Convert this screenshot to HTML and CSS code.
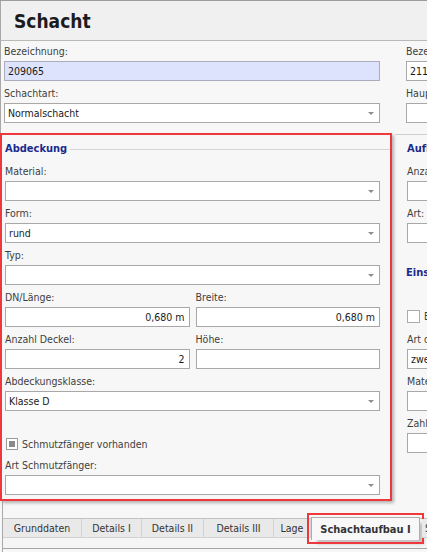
FILE: index.html
```html
<!DOCTYPE html>
<html lang="de">
<head>
<meta charset="utf-8">
<title>Schacht</title>
<link rel="stylesheet" href="styles.css">
</head>
<body>
<div class="window">
  <div class="header"><h1>Schacht</h1></div>
  <div class="cols">
    <div class="left">
      <div class="top">
        <div class="field">
          <div class="lbl">Bezeichnung:</div>
          <div class="inp hl">209065</div>
        </div>
        <div class="field">
          <div class="lbl">Schachtart:</div>
          <div class="inp sel">Normalschacht</div>
        </div>
      </div>
      <div class="group red">
        <div class="gtitle line">Abdeckung</div>
        <div class="gfields">
          <div class="field">
            <div class="lbl">Material:</div>
            <div class="inp sel"></div>
          </div>
          <div class="field">
            <div class="lbl">Form:</div>
            <div class="inp sel">rund</div>
          </div>
          <div class="field">
            <div class="lbl">Typ:</div>
            <div class="inp sel"></div>
          </div>
          <div class="row2">
            <div class="field">
              <div class="lbl">DN/Länge:</div>
              <div class="inp num">0,680 m</div>
            </div>
            <div class="field">
              <div class="lbl">Breite:</div>
              <div class="inp num">0,680 m</div>
            </div>
          </div>
          <div class="row2">
            <div class="field">
              <div class="lbl">Anzahl Deckel:</div>
              <div class="inp num">2</div>
            </div>
            <div class="field">
              <div class="lbl">Höhe:</div>
              <div class="inp num"></div>
            </div>
          </div>
          <div class="field">
            <div class="lbl">Abdeckungsklasse:</div>
            <div class="inp sel">Klasse D</div>
          </div>
          <div class="check-row first-check">
            <span class="cb indet"></span>
            <span class="cb-text">Schmutzfänger vorhanden</span>
          </div>
          <div class="field">
            <div class="lbl">Art Schmutzfänger:</div>
            <div class="inp sel"></div>
          </div>
        </div>
      </div>
      <div class="spacer"></div>
    </div>
    <div class="right">
      <div class="rtop">
        <div class="field">
          <div class="lbl">Bezeichnung:</div>
          <div class="inp wide">211065</div>
        </div>
        <div class="field">
          <div class="lbl">Hauptkanal:</div>
          <div class="inp wide"></div>
        </div>
      </div>
      <div class="rgroup">
        <div class="gtitle">Aufbau</div>
        <div class="gfields">
          <div class="field">
            <div class="lbl">Anzahl Ringe:</div>
            <div class="inp wide"></div>
          </div>
          <div class="field">
            <div class="lbl">Art:</div>
            <div class="inp wide"></div>
          </div>
        </div>
        <div class="gtitle second">Einstieg</div>
        <div class="gfields">
          <div class="check-row second-check">
            <span class="cb big"></span>
            <span class="cb-text">Einstiegshilfe vorhanden</span>
          </div>
          <div class="field">
            <div class="lbl">Art der Einstiegshilfe:</div>
            <div class="inp wide">zweiholmig</div>
          </div>
          <div class="field">
            <div class="lbl">Material:</div>
            <div class="inp wide"></div>
          </div>
          <div class="field">
            <div class="lbl">Zahl der Steigeisen:</div>
            <div class="inp wide"></div>
          </div>
        </div>
      </div>
    </div>
  </div>
  <div class="tabarea">
    <div class="tabstrip">
      <div class="tab t1">Grunddaten</div>
      <div class="tab t2">Details I</div>
      <div class="tab t3">Details II</div>
      <div class="tab t4">Details III</div>
      <div class="tab t5">Lage</div>
      <div class="tab active">Schachtaufbau I</div>
      <div class="tab t7">Schachtaufbau II</div>
    </div>
  </div>
</div>
</body>
</html>
```

FILE: styles.css
```css
html, body {
  margin: 0;
  padding: 0;
}
body {
  width: 427px;
  height: 552px;
  overflow: hidden;
  background: #f7f7f7;
  font-family: "DejaVu Sans Condensed", "DejaVu Sans", sans-serif;
  font-stretch: condensed;
  font-size: 10.5px;
  color: #3e3e3e;
}
.window {
  width: 427px;
  height: 552px;
  box-sizing: border-box;
  border-top: 1px solid #9c9c9c;
  display: flex;
  flex-direction: column;
}
.header {
  height: 39px;
  flex: none;
  background: #f0f0f0;
  border-bottom: 1px solid #b9b9b9;
  border-left: 1px solid #a8a8a8;
  display: flex;
  align-items: center;
  padding-left: 13px;
}
h1 {
  margin: 0;
  font-size: 19px;
  line-height: 22px;
  font-weight: bold;
  color: #1c1c1c;
}
.cols {
  display: flex;
  height: 477px;
  flex: none;
}
.left {
  width: 392px;
  flex: none;
  display: flex;
  flex-direction: column;
}
.top {
  border-left: 1px solid #a8a8a8;
  padding: 4px 12px 10px 3px;
  display: flex;
  flex-direction: column;
  gap: 6px;
}
.field {
  display: flex;
  flex-direction: column;
  gap: 3px;
  min-width: 0;
}
.lbl {
  height: 13px;
  line-height: 13px;
  white-space: nowrap;
}
.inp {
  height: 20px;
  box-sizing: border-box;
  border: 1px solid #a8a8a8;
  background: #ffffff;
  padding: 0 4px 0 3px;
  display: flex;
  align-items: center;
  color: #1a1a1a;
  white-space: nowrap;
  overflow: hidden;
}
.inp.hl {
  background: #dee3fd;
  border-color: #a9acbc;
}
.inp.sel::after {
  content: "";
  margin-left: auto;
  margin-right: 1px;
  width: 0;
  height: 0;
  border-left: 3px solid transparent;
  border-right: 3px solid transparent;
  border-top: 3px solid #8c8c8c;
}
.inp.num {
  justify-content: flex-end;
}
.inp.wide {
  width: 200px;
}
.group.red {
  border: 2px solid #ee383e;
  box-shadow: 2px 2px 3px rgba(0, 0, 0, 0.28);
  padding: 6px 10px 4px 3px;
}
.gtitle {
  height: 16px;
  line-height: 16px;
  margin-bottom: 8px;
  display: flex;
  align-items: center;
  font-size: 11px;
  font-weight: bold;
  color: #1b2a8c;
  white-space: nowrap;
}
.gtitle.line {
  margin-right: -10px;
}
.gtitle.line::after {
  content: "";
  flex: 1;
  height: 1px;
  background: #d5d5d5;
  margin-left: 3px;
}
.gfields {
  display: flex;
  flex-direction: column;
  gap: 6px;
}
.row2 {
  display: grid;
  grid-template-columns: 1fr 1fr;
  gap: 6px;
}
.check-row {
  display: flex;
  align-items: center;
  white-space: nowrap;
}
.first-check {
  height: 18px;
  margin-top: 18px;
  padding-left: 1px;
}
.cb {
  width: 12px;
  height: 12px;
  box-sizing: border-box;
  border: 1px solid #9a9a9a;
  background: #ffffff;
  display: flex;
  align-items: center;
  justify-content: center;
  flex: none;
}
.cb.indet::before {
  content: "";
  width: 6px;
  height: 6px;
  background: #8a8a8a;
}
.cb.big {
  width: 13px;
  height: 13px;
  border-color: #ababab;
}
.cb-text {
  margin-left: 4px;
  color: #3e3e3e;
}
.spacer {
  flex: 1;
  margin-left: 2px;
  border-left: 1px solid #a8a8a8;
}
.right {
  flex: none;
  width: 240px;
}
.rtop {
  padding: 4px 0 0 14px;
  display: flex;
  flex-direction: column;
  gap: 6px;
}
.rgroup {
  margin: 11px 0 0 3px;
  border-top: 1px solid #d0d0d0;
  padding: 6px 0 0 12px;
}
.gtitle.second {
  margin-top: 22px;
  margin-left: -1px;
}
.second-check {
  height: 22px;
  margin-top: 16px;
}
.tabarea {
  flex: 1;
  margin-left: 2px;
  border-left: 1px solid #a8a8a8;
  display: flex;
  flex-direction: column;
}
.tabstrip {
  height: 31px;
  box-sizing: border-box;
  border-top: 1px solid #c2c2c2;
  border-bottom: 1px solid #a4a4a4;
  display: flex;
  align-items: flex-start;
  background: #f5f5f5;
}
.tab {
  flex: none;
  height: 19px;
  box-sizing: border-box;
  background: #e9e9e9;
  border-right: 1px solid #d2d2d2;
  border-bottom: 1px solid #d2d2d2;
  display: flex;
  align-items: center;
  justify-content: center;
  white-space: nowrap;
  color: #333333;
}
.t1 { width: 79px; }
.t2 { width: 60px; }
.t3 { width: 62px; }
.t4 { width: 70px; }
.t5 { width: 37px; }
.t7 {
  width: 100px;
  margin-left: 2px;
  justify-content: flex-start;
  padding-left: 3px;
}
.tab.active {
  width: 109px;
  height: 23px;
  margin-top: -2px;
  background: #f8f8f8;
  border: 1px solid #adadad;
  border-bottom: none;
  font-size: 11px;
  font-weight: bold;
  color: #333333;
  outline: 2px solid #ee383e;
  outline-offset: 2px;
  box-shadow: 5px 5px 3px -1px rgba(0, 0, 0, 0.2);
}
```
